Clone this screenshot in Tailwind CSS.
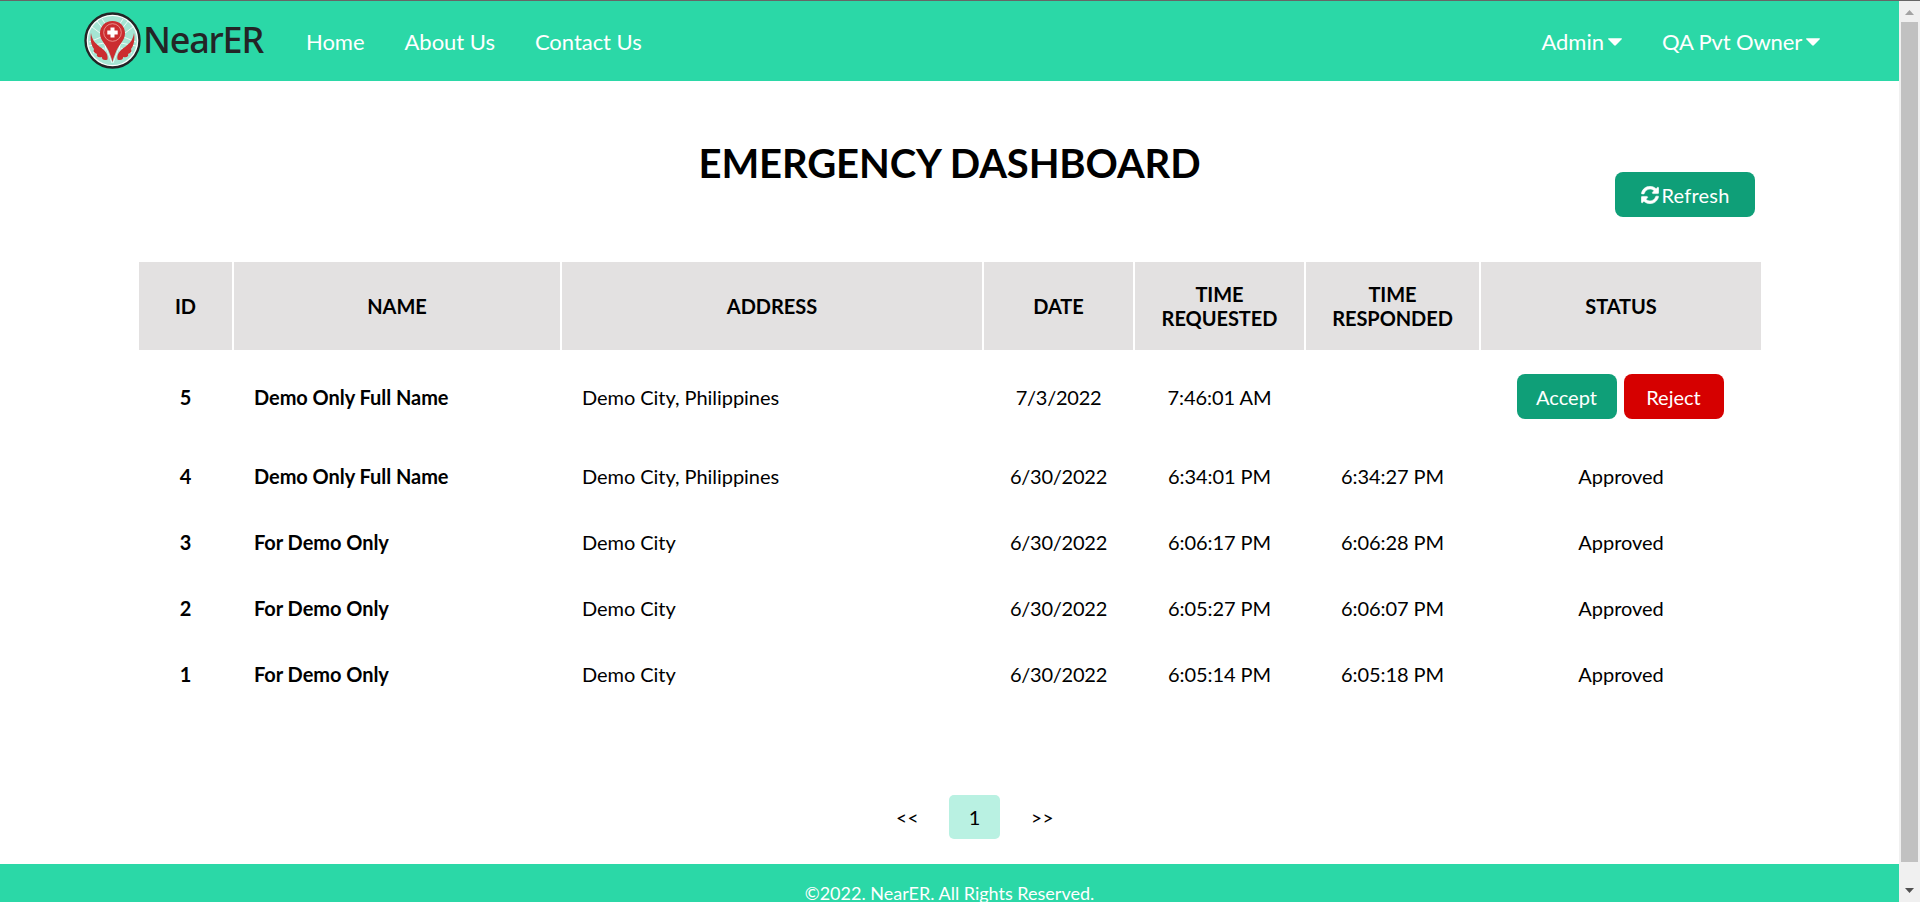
<!DOCTYPE html>
<html lang="en">
<head>
<meta charset="utf-8">
<title>NearER</title>
<script src="https://cdn.jsdelivr.net/npm/@tailwindcss/browser@4"></script>
</head>
<body class="flex h-[902px] w-[1920px] overflow-hidden border-t border-[#666] bg-white font-['Lato',sans-serif] text-black">
<div class="flex h-[901px] w-[1899px] flex-col overflow-hidden">
  <header class="flex h-20 shrink-0 items-center bg-[#2bd8a7] pr-[79px] pl-[84px] text-[22px] text-white">
    <a class="flex w-[222px] items-center gap-[2px] pb-0.5">
      <svg class="size-[57px] shrink-0" viewBox="0 0 57 57">
        <circle cx="28.5" cy="28.5" r="27" fill="#fff" stroke="#232526" stroke-width="2.4"/>
        <circle cx="28.5" cy="28.5" r="24.5" fill="#a5e5d3"/>
        <g fill="none" stroke="#fff" stroke-width=".8"><path d="M8 15l12 9-15 6M13 9l10 13-3 25M5 34l15-3 8 20M49 15L37 24l15 6M44 9L34 22l3 25M52 34l-15-3-8 20M9 41l11-5M48 41l-11-5M18 7l4 6M39 7l-4 6"/></g>
        <path fill="#cb2d30" d="M28.500 9C21 9 16 14.500 16 21.200c0 7 5.500 10.800 8.500 17.300 1.500 4 3 7 4 11.500 1-4.500 2.500-7.500 4-11.500 3-6.500 8.500-10.300 8.500-17.300C41 14.500 36 9 28.500 9z"/>
        <path fill="#cb2d30" d="M7 21c1 7 4 10 9 14 5 3.500 8.500 7 7.500 12.500-3 1.500-6 0-5.500-2.500-4 1-6-1-5-3-3-1-4-3-3-5-3-4-4-10-3-16zM50 21c-1 7-4 10-9 14-5 3.500-8.500 7-7.500 12.500 3 1.500 6 0 5.500-2.500 4 1 6-1 5-3 3-1 4-3 3-5 3-4 4-10 3-16z"/>
        <circle cx="28.500" cy="20.500" r="8.800" fill="none" stroke="#eda5a0" stroke-width=".8"/>
        <path fill="#fff" d="M26.500 15.500h4v3h3.200v4h-3.200v3h-4v-3h-3.200v-4h3.200z"/>
      </svg>
      <span class="font-['Noto_Sans'] text-[36px] leading-none font-medium tracking-[-1.2px] text-[#232526]">NearER</span>
    </a>
    <nav class="flex flex-1 items-center gap-10 tracking-[-0.03px]">
      <a>Home</a><a>About Us</a><a>Contact Us</a>
      <a class="ml-auto flex items-center gap-1">Admin<svg class="mt-0.5 h-[8px] w-[14px]" viewBox="0 0 13 7"><path fill="#fff" d="M.6 0h11.800q.9.200.3 1L7.300 6.500q-.8.800-1.600 0L.3 1Q-.3.200.6 0z"/></svg></a>
      <a class="flex items-center gap-1 tracking-[-0.15px]">QA Pvt Owner<svg class="mt-0.5 h-[8px] w-[14px]" viewBox="0 0 13 7"><path fill="#fff" d="M.6 0h11.800q.9.200.3 1L7.300 6.500q-.8.800-1.600 0L.3 1Q-.3.200.6 0z"/></svg></a>
    </nav>
  </header>
  <main class="flex h-[783px] shrink-0 flex-col">
    <div class="flex h-[181px] shrink-0 justify-center pt-[58px]">
      <div class="grid w-[1611px] grid-cols-[1fr_auto_1fr] items-start">
        <h1 class="col-start-2 text-[40px] leading-[48px] font-bold tracking-[-0.12px]">EMERGENCY DASHBOARD</h1>
        <button class="mt-[33px] flex h-[45px] w-[140px] items-center justify-center gap-[3px] justify-self-end rounded-[8px] bg-[#0f9f78] text-[20px] tracking-[0.2px] text-white">
          <svg class="size-[18px]" viewBox="0 0 512 512" fill="#fff"><path d="M370.720 133.280C339.458 104.008 298.888 87.962 255.848 88c-77.458.068-144.328 53.178-162.791 126.850-1.344 5.363-6.122 9.150-11.651 9.150H24.103c-7.498 0-13.194-6.807-11.807-14.176C33.933 94.924 134.813 8 256 8c66.448 0 126.791 26.136 171.315 68.685L463.030 40.970C478.149 25.851 504 36.559 504 57.941V192c0 13.255-10.745 24-24 24H345.941c-21.382 0-32.090-25.851-16.971-40.971l41.750-41.749zM32 296h134.059c21.382 0 32.090 25.851 16.971 40.971l-41.750 41.750c31.262 29.273 71.835 45.319 114.876 45.280 77.418-.07 144.315-53.144 162.787-126.849 1.344-5.363 6.122-9.150 11.651-9.150h57.304c7.498 0 13.194 6.807 11.807 14.176C478.067 417.076 377.187 504 256 504c-66.448 0-126.791-26.136-171.315-68.685L48.970 471.030C33.851 486.149 8 475.441 8 454.059V320c0-13.255 10.745-24 24-24z" stroke="#fff" stroke-width="16"/></svg>Refresh</button>
      </div>
    </div>
    <div class="ml-[139px] grid w-[1622px] grid-cols-[93px_326px_420px_149px_169px_173px_280px] grid-rows-[88px_90px_64px_64px_64px_64px] gap-0.5 text-[20px] leading-6 tracking-[-0.05px] *:flex *:items-center *:justify-center *:text-center">
      <div class="bg-[#e3e1e1] font-bold">ID</div><div class="bg-[#e3e1e1] font-bold">NAME</div><div class="bg-[#e3e1e1] font-bold">ADDRESS</div><div class="bg-[#e3e1e1] font-bold">DATE</div><div class="bg-[#e3e1e1] font-bold">TIME<br>REQUESTED</div><div class="bg-[#e3e1e1] font-bold">TIME<br>RESPONDED</div><div class="bg-[#e3e1e1] font-bold">STATUS</div>

      <div class="font-bold">5</div><div class="justify-start! pl-5 font-bold">Demo Only Full Name</div><div class="justify-start! pl-5">Demo City, Philippines</div><div class="tracking-[-0.25px]">7/3/2022</div><div>7:46:01 AM</div><div></div>
      <div class="gap-[7px] pr-0.5 pb-px tracking-normal text-white"><button class="h-[45px] w-[100px] rounded-[8px] bg-[#0f9f78]">Accept</button><button class="h-[45px] w-[100px] rounded-[8px] bg-[#d60000]">Reject</button></div>

      <div class="font-bold">4</div><div class="justify-start! pl-5 font-bold">Demo Only Full Name</div><div class="justify-start! pl-5">Demo City, Philippines</div><div class="tracking-[-0.25px]">6/30/2022</div><div>6:34:01 PM</div><div>6:34:27 PM</div><div>Approved</div>

      <div class="font-bold">3</div><div class="justify-start! pl-5 font-bold">For Demo Only</div><div class="justify-start! pl-5">Demo City</div><div class="tracking-[-0.25px]">6/30/2022</div><div>6:06:17 PM</div><div>6:06:28 PM</div><div>Approved</div>

      <div class="font-bold">2</div><div class="justify-start! pl-5 font-bold">For Demo Only</div><div class="justify-start! pl-5">Demo City</div><div class="tracking-[-0.25px]">6/30/2022</div><div>6:05:27 PM</div><div>6:06:07 PM</div><div>Approved</div>

      <div class="font-bold">1</div><div class="justify-start! pl-5 font-bold">For Demo Only</div><div class="justify-start! pl-5">Demo City</div><div class="tracking-[-0.25px]">6/30/2022</div><div>6:05:14 PM</div><div>6:05:18 PM</div><div>Approved</div>
    </div>
    <div class="mt-auto mb-[25px] ml-[881px] flex h-11 items-center text-[20px]">
      <span class="w-[68px] pt-0.5 pl-[15px] text-[19px] tracking-[0.5px]">&lt;&lt;</span>
      <span class="flex h-11 w-[51px] items-center justify-center rounded-[5px] bg-[#b9f1e2]">1</span>
      <span class="pt-0.5 pl-[31px] text-[19px] tracking-[0.5px]">&gt;&gt;</span>
    </div>
  </main>
  <footer class="h-[38px] shrink-0 overflow-hidden bg-[#2bd8a7] pt-[18px] text-center text-[18px] leading-[22px] whitespace-nowrap text-white">©2022. NearER. All Rights Reserved.</footer>
</div>
<div class="flex h-[901px] w-[21px] flex-col items-center bg-[#f0f0f0]">
  <div class="flex h-[21px] w-full items-center justify-center pt-0.5"><svg class="h-[5px] w-[9px]" viewBox="0 0 9 5"><path fill="#a3a3a3" d="M4.500 0L9 5H0z"/></svg></div>
  <div class="h-[840px] w-[17px] bg-[#c1c1c1]"></div>
  <div class="flex flex-1 items-center justify-center pt-[16px]"><svg class="h-[5px] w-[9px]" viewBox="0 0 9 5"><path fill="#505050" d="M4.500 5L9 0H0z"/></svg></div>
</div>
</body>
</html>
